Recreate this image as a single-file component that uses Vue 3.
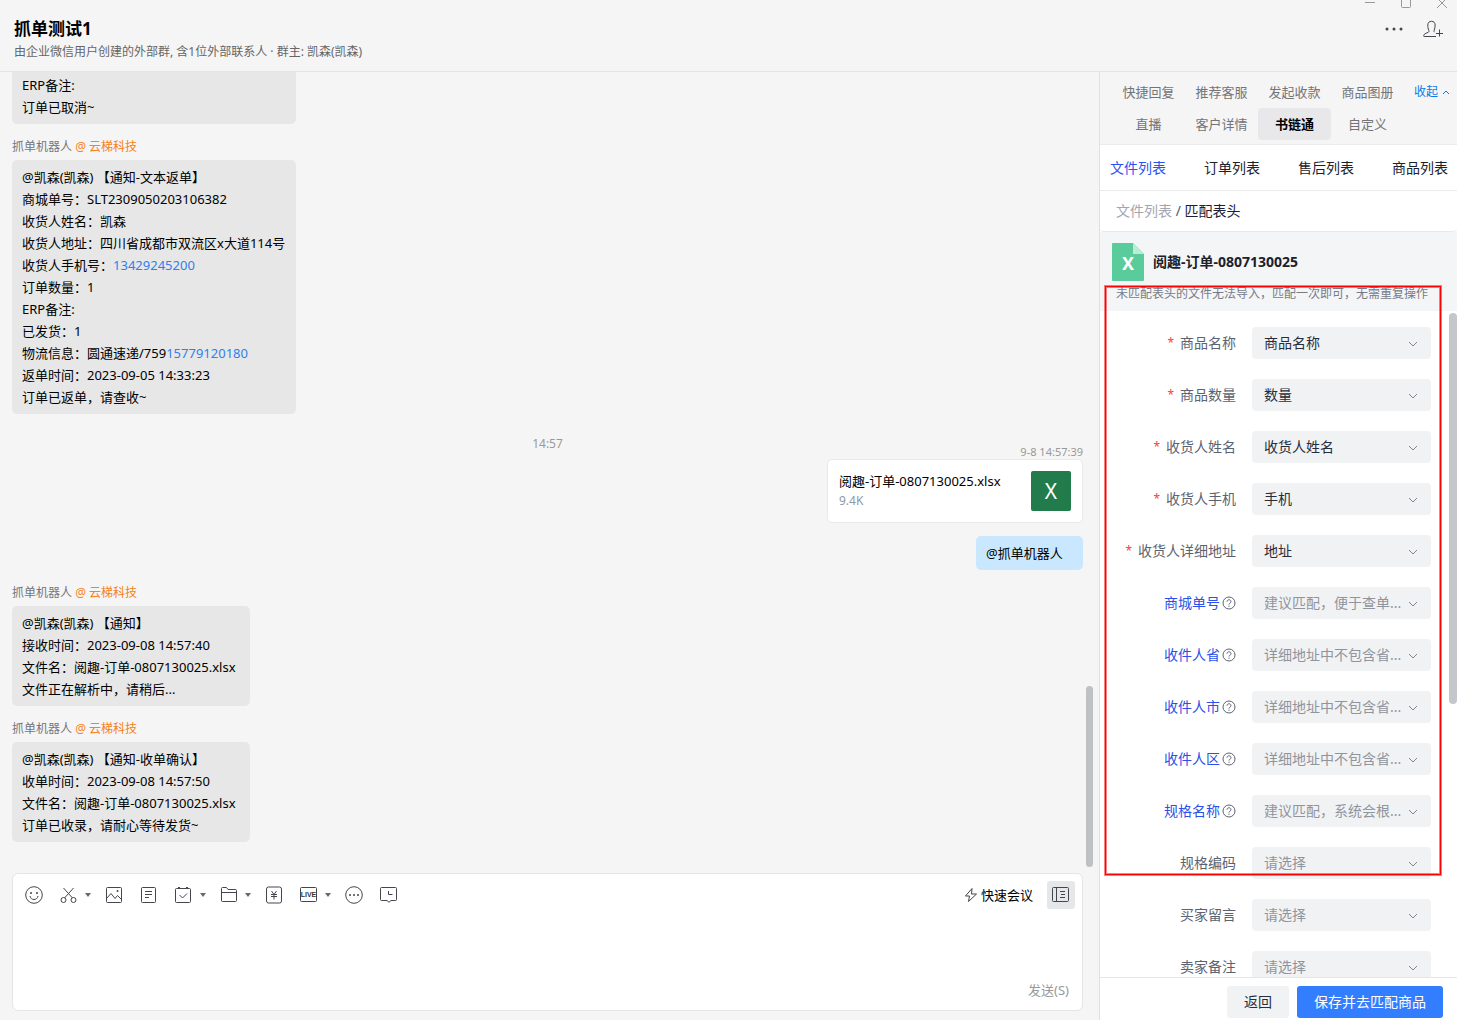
<script setup>
import { ref } from 'vue'

const panelTabs = ['快捷回复', '推荐客服', '发起收款', '商品图册', '直播', '客户详情', '书链通', '自定义']
const activePanel = ref('书链通')
const listTabs = ['文件列表', '订单列表', '售后列表', '商品列表']
const activeList = ref('文件列表')

const returned = [
  [{ t: '@凯森(凯森) 【通知-文本返单】' }],
  [{ t: '商城单号：SLT2309050203106382' }],
  [{ t: '收货人姓名：凯森' }],
  [{ t: '收货人地址：四川省成都市双流区x大道114号' }],
  [{ t: '收货人手机号：' }, { t: '13429245200', link: true }],
  [{ t: '订单数量：1' }],
  [{ t: 'ERP备注:' }],
  [{ t: '已发货：1' }],
  [{ t: '物流信息：圆通速递/759' }, { t: '15779120180', link: true }],
  [{ t: '返单时间：2023-09-05 14:33:23' }],
  [{ t: '订单已返单，请查收~' }],
]

const notices = [
  ['@凯森(凯森) 【通知】', '接收时间：2023-09-08 14:57:40', '文件名：阅趣-订单-0807130025.xlsx', '文件正在解析中，请稍后...'],
  ['@凯森(凯森) 【通知-收单确认】', '收单时间：2023-09-08 14:57:50', '文件名：阅趣-订单-0807130025.xlsx', '订单已收录，请耐心等待发货~'],
]

const fields = [
  { label: '商品名称', value: '商品名称', required: true },
  { label: '商品数量', value: '数量', required: true },
  { label: '收货人姓名', value: '收货人姓名', required: true },
  { label: '收货人手机', value: '手机', required: true },
  { label: '收货人详细地址', value: '地址', required: true },
  { label: '商城单号', hint: '建议匹配，便于查单...', help: true },
  { label: '收件人省', hint: '详细地址中不包含省...', help: true },
  { label: '收件人市', hint: '详细地址中不包含省...', help: true },
  { label: '收件人区', hint: '详细地址中不包含省...', help: true },
  { label: '规格名称', hint: '建议匹配，系统会根...', help: true },
  { label: '规格编码', hint: '请选择' },
  { label: '买家留言', hint: '请选择' },
  { label: '卖家备注', hint: '请选择' },
]

const draft = ref('')
</script>

<template>
  <div class="app">
    <header class="header">
      <div class="heading">
        <h1>抓单测试1</h1>
        <p>由企业微信用户创建的外部群, 含1位外部联系人 · 群主: 凯森(凯森)</p>
      </div>
      <div class="header-tools">
        <div class="window-controls">
          <button aria-label="最小化"><svg width="12" height="10" viewBox="0 0 12 10"><path d="M1 2.500h10" /></svg></button>
          <button aria-label="最大化"><svg width="12" height="10" viewBox="0 0 12 10"><path d="M1.500 -2v8.500q0 1 1 1h7q1 0 1-1V-2" /></svg></button>
          <button aria-label="关闭"><svg width="12" height="10" viewBox="0 0 12 10"><path d="M1 -2l10 10M11 -2L1 8" /></svg></button>
        </div>
        <div class="actions">
          <button aria-label="更多">
            <svg width="18" height="18" viewBox="0 0 18 18"><g class="fill"><circle cx="2" cy="9" r="1.500" /><circle cx="9" cy="9" r="1.500" /><circle cx="16" cy="9" r="1.500" /></g></svg>
          </button>
          <button aria-label="添加成员">
            <svg width="20" height="18" viewBox="0 0 20 18"><path d="M13 16.500H1.200q-.7 0-.5-1 .3-1.500 2.400-2.300l2.300-1q.9-.5.5-1.700C5 8.500 4.700 7 4.800 5c0-2.400 1.500-3.700 3.700-3.700S12.100 2.600 12.100 5c.1 2-.3 3.500-1 5.500-.3.800 0 1.300.5 1.700M16.500 9.500v7M13 13.500h7" /></svg>
          </button>
        </div>
      </div>
    </header>

    <main class="body">
      <section class="chat">
        <div class="messages">
          <div class="bubble cut">
            <p>ERP备注:</p>
            <p>订单已取消~</p>
          </div>

          <div class="sender">抓单机器人 <span>@ 云梯科技</span></div>
          <div class="bubble wide">
            <p v-for="(line, i) in returned" :key="i">
              <template v-for="(part, j) in line" :key="j"><a v-if="part.link" href="#">{{ part.t }}</a><template v-else>{{ part.t }}</template></template>
            </p>
          </div>

          <time class="divider">14:57</time>
          <time class="sent-at">9-8 14:57:39</time>
          <div class="file-card">
            <div class="file-info">
              <div>阅趣-订单-0807130025.xlsx</div>
              <small>9.4K</small>
            </div>
            <div class="xls">X</div>
          </div>
          <div class="bubble mine"><p>@抓单机器人</p></div>

          <template v-for="(lines, i) in notices" :key="i">
            <div class="sender">抓单机器人 <span>@ 云梯科技</span></div>
            <div class="bubble notice"><p v-for="line in lines" :key="line">{{ line }}</p></div>
          </template>
          <div class="chat-thumb"></div>
        </div>

        <form class="composer" @submit.prevent>
          <div class="toolbar">
            <button type="button" aria-label="表情">
              <svg width="18" height="18" viewBox="0 0 18 18"><circle cx="9" cy="9" r="8.300" /><path d="M5 10c.3 2.200 2 3.500 4 3.500s3.700-1.300 4-3.500" /><g class="fill"><circle cx="6" cy="7" r="1" /><circle cx="12" cy="7" r="1" /></g></svg>
            </button>
            <button type="button" class="drop" aria-label="截图">
              <svg width="18" height="18" viewBox="0 0 18 18"><path d="M3.500 2l9 10M13.500 2l-9 10" /><circle cx="3.500" cy="14" r="2.500" /><circle cx="13.500" cy="14" r="2.500" /></svg>
              <i></i>
            </button>
            <button type="button" aria-label="图片">
              <svg width="18" height="18" viewBox="0 0 18 18"><rect x="1.500" y="1.500" width="15" height="15" rx="1" /><path d="M1.500 12.500l4.500-5 4 5 2.500-3 4 4" /><circle class="fill" cx="12.500" cy="5" r="1" /></svg>
            </button>
            <button type="button" aria-label="文档">
              <svg width="18" height="18" viewBox="0 0 18 18"><rect x="1.500" y="1.500" width="14" height="15" rx="1" /><path d="M5 5.500h7M5 8.500h7M5 11.500h4" /></svg>
            </button>
            <button type="button" class="drop" aria-label="待办">
              <svg width="18" height="18" viewBox="0 0 18 18"><rect x=".5" y="2.500" width="15" height="14" rx="1" /><path d="M3 1.500h2M11 1.500h2M4.500 9l3 3L12 7.500" /></svg>
              <i></i>
            </button>
            <button type="button" class="drop" aria-label="文件">
              <svg width="18" height="18" viewBox="0 0 18 18"><path d="M1.500 15V2.500q0-1 1-1h4l1.500 2h7.500q1 0 1 1V14.500q0 1-1 1h-13q-1 0-1-1zM1.500 6.500h15" /></svg>
              <i></i>
            </button>
            <button type="button" aria-label="红包">
              <svg width="18" height="18" viewBox="0 0 18 18"><rect x="1.500" y="1" width="15" height="16" rx="2" /><path d="M6.500 5L9 8.500 11.500 5M9 8.500v5M6 8.500h6M6 10.500h6" /></svg>
            </button>
            <button type="button" class="drop" aria-label="直播">
              <svg width="18" height="18" viewBox="0 0 18 18"><rect x=".5" y="1.500" width="16" height="14" rx="1" /><text x="8.500" y="11" text-anchor="middle">LIVE</text></svg>
              <i></i>
            </button>
            <button type="button" aria-label="更多工具">
              <svg width="18" height="18" viewBox="0 0 18 18"><circle cx="9" cy="9" r="8.300" /><g class="fill"><circle cx="5" cy="9" r="1" /><circle cx="9" cy="9" r="1" /><circle cx="13" cy="9" r="1" /></g></svg>
            </button>
            <button type="button" aria-label="聊天记录">
              <svg width="18" height="18" viewBox="0 0 18 18"><path d="M1.500 1.500h14q1 0 1 1v11q0 1-1 1h-4.500l-2 1.800-2-1.800H1.500q-1 0-1-1v-11q0-1 1-1zM8.500 5v3.500h4" /></svg>
            </button>
            <button type="button" class="meeting">
              <svg width="14" height="16" viewBox="0 0 14 16"><path d="M8 1.500L1.500 9h4l-1 5.500L12.500 7h-5z" /></svg>快速会议
            </button>
            <button type="button" class="toggle" aria-label="侧边栏">
              <svg width="18" height="18" viewBox="0 0 18 18"><rect x=".5" y="1.500" width="16" height="14" rx="1" /><path d="M4.500 1.500v14M8 5.500h5M9 8.500h4M8 11.500h5" /></svg>
            </button>
          </div>
          <textarea v-model="draft" aria-label="输入消息"></textarea>
          <button type="submit" class="send">发送(S)</button>
        </form>
      </section>

      <aside class="side">
        <div class="panel-tabs">
          <div class="tab-grid">
            <button v-for="tab in panelTabs" :key="tab" :class="{ active: tab === activePanel }" @click="activePanel = tab">{{ tab }}</button>
          </div>
          <button class="collapse">收起<svg width="8" height="8" viewBox="0 0 8 8"><path d="M1 6l3-3 3 3" /></svg></button>
        </div>
        <nav class="list-tabs">
          <a v-for="tab in listTabs" :key="tab" href="#" :class="{ active: tab === activeList }" @click.prevent="activeList = tab">{{ tab }}</a>
        </nav>
        <div class="crumbs"><a href="#">文件列表</a> / <span>匹配表头</span></div>
        <div class="file-head">
          <div class="file-title">
            <div class="sheet">
              <svg width="32" height="38" viewBox="0 0 32 38"><path d="M1 0h20l11 11v26q0 1-1 1H1q-1 0-1-1V1q0-1 1-1z" fill="#5acb9b" stroke="none" /><path d="M21 0l11 11H21z" fill="#bdebd7" stroke="none" /></svg>
              <span>X</span>
            </div>
            <h2>阅趣-订单-0807130025</h2>
          </div>
          <p>未匹配表头的文件无法导入，匹配一次即可，无需重复操作</p>
        </div>
        <form class="fields" @submit.prevent>
          <div v-for="(f, i) in fields" :key="f.label" class="field">
            <label :for="'field-' + i" :class="{ optional: f.help }"><b v-if="f.required">*</b>{{ f.label }}<svg v-if="f.help" width="14" height="14" viewBox="0 0 14 14"><circle cx="7" cy="7" r="6" /><path d="M5 5.700c0-2.600 4-2.600 4 0 0 1.400-2 1.400-2 2.800M7 9.600v1.200" /></svg></label>
            <div class="select">
              <select :id="'field-' + i" :class="{ empty: !f.value }">
                <option>{{ f.value || f.hint }}</option>
              </select>
              <svg width="10" height="10" viewBox="0 0 10 10"><path d="M1 3l4 4 4-4" /></svg>
            </div>
          </div>
        </form>
        <footer class="footer">
          <button>返回</button>
          <button class="primary">保存并去匹配商品</button>
        </footer>
        <div class="side-thumb"></div>
        <div class="highlight"></div>
      </aside>
    </main>
  </div>
</template>

<style>
body {
  margin: 0;
}
</style>

<style scoped>
.app {
  display: flex;
  flex-direction: column;
  height: 100vh;
  overflow: hidden;
  background: #f5f5f5;
  color: #000;
  font: 13px/22px "Noto Sans", "Noto Sans CJK SC", sans-serif;
}
.app * {
  box-sizing: border-box;
}
h1, h2, p {
  margin: 0;
}
a {
  color: #2f80ed;
  text-decoration: none;
}
button {
  padding: 0;
  border: 0;
  background: none;
  font: inherit;
  color: inherit;
  cursor: pointer;
}
svg {
  display: block;
  flex: none;
  fill: none;
  stroke: #43464d;
  stroke-width: 1;
}
svg .fill {
  fill: #43464d;
  stroke: none;
}
svg text {
  fill: #33363d;
  stroke: none;
  font: bold 7px "Liberation Sans", sans-serif;
}

.header {
  display: flex;
  justify-content: space-between;
  flex: none;
  height: 72px;
  border-bottom: 1px solid #e4e4e4;
}
.heading {
  padding: 18px 14px 0;
}
h1 {
  font-size: 17px;
  line-height: 22px;
}
.heading p {
  color: #666;
  font-size: 12px;
  line-height: 24px;
}
.header-tools {
  display: flex;
  flex-direction: column;
  align-items: flex-end;
}
.window-controls {
  display: flex;
  gap: 24px;
  padding-right: 9px;
}
.window-controls svg {
  stroke: #999;
}
.actions {
  display: flex;
  gap: 20px;
  padding: 10px 14px 0 0;
}

.body {
  display: flex;
  flex: 1;
  min-height: 0;
}
.chat {
  display: flex;
  flex: 1;
  flex-direction: column;
  min-width: 0;
  padding-bottom: 9px;
}
.messages {
  position: relative;
  display: flex;
  flex: 1;
  flex-direction: column;
  align-items: flex-start;
  min-height: 0;
  padding: 0 16px 0 12px;
}
.bubble {
  flex: none;
  padding: 6px 10px;
  border-radius: 5px;
  background: #e7e7e7;
  white-space: nowrap;
}
.bubble.wide {
  min-width: 284px;
}
.bubble.notice {
  min-width: 238px;
}
.bubble.cut {
  min-width: 284px;
  padding-top: 2px;
  border-radius: 0 0 5px 5px;
}
.bubble.mine {
  align-self: flex-end;
  min-width: 107px;
  margin-top: 13px;
  background: #c9e7ff;
}
.sender {
  margin: 12px 0 2px;
  color: #737680;
  font-size: 12px;
  line-height: 22px;
}
.sender span {
  color: #f58220;
}
.divider {
  align-self: center;
  margin-top: 20px;
  color: #999;
  font-size: 12px;
  line-height: 20px;
}
.sent-at {
  align-self: flex-end;
  margin-top: -10px;
  color: #999;
  font-size: 11px;
  line-height: 15px;
}
.file-card {
  display: flex;
  align-self: flex-end;
  justify-content: space-between;
  width: 256px;
  padding: 11px;
  border: 1px solid #e9e9e9;
  border-radius: 5px;
  background: #fff;
}
.file-info {
  line-height: 20px;
}
.file-info small {
  display: block;
  color: #8e9aa8;
  font-size: 12px;
}
.xls {
  width: 40px;
  border-radius: 2px;
  background: #217b4a;
  color: #fff;
  font-size: 21px;
  line-height: 40px;
  text-align: center;
}
.chat-thumb {
  position: absolute;
  right: 6px;
  bottom: 6px;
  width: 7px;
  height: 181px;
  border-radius: 4px;
  background: #bfc0c4;
}

.composer {
  display: flex;
  flex-direction: column;
  flex: none;
  height: 138px;
  margin: 0 16px 0 12px;
  border: 1px solid #e5e5e5;
  border-radius: 6px;
  background: #fff;
}
.toolbar {
  display: flex;
  align-items: center;
  gap: 17px;
  height: 42px;
  padding: 0 7px 0 12px;
}
.drop {
  display: flex;
  align-items: center;
  gap: 7px;
  margin-right: -3px;
}
.drop i {
  border: 3px solid transparent;
  border-top: 4px solid #666972;
  border-bottom: 0;
}
.meeting {
  display: flex;
  align-items: center;
  gap: 3px;
  margin: 0 -3px 0 auto;
}
.toggle {
  padding: 5px;
  border-radius: 3px;
  background: #e6e7e9;
}
textarea {
  flex: 1;
  padding: 4px 12px;
  border: 0;
  outline: 0;
  background: none;
  font: inherit;
  resize: none;
}
.send {
  align-self: flex-end;
  margin: 0 13px 9px;
  color: #999;
}

.side {
  position: relative;
  display: flex;
  flex: none;
  flex-direction: column;
  width: 358px;
  border-left: 1px solid #e0e0e2;
  background: #fff;
}
.panel-tabs {
  display: flex;
  align-items: flex-start;
  gap: 10px;
  padding: 4px 7px 4px 12px;
  border-bottom: 1px solid #ebebed;
  background: #f5f5f5;
}
.tab-grid {
  display: grid;
  flex: none;
  grid-template-columns: repeat(4, 73px);
}
.tab-grid button {
  height: 32px;
  border-radius: 4px;
  color: #737478;
}
.tab-grid .active {
  background: #e8e8ea;
  color: #000;
  font-weight: bold;
}
.collapse {
  display: flex;
  align-items: center;
  gap: 4px;
  height: 32px;
  color: #0a7be8;
  font-size: 12px;
  white-space: nowrap;
}
.collapse svg {
  stroke: #0a7be8;
}
.list-tabs {
  display: flex;
  justify-content: space-between;
  padding: 12px 9px 11px 10px;
  border-bottom: 1px solid #ebebed;
  font-size: 14px;
}
.list-tabs a {
  color: #1d2129;
}
.list-tabs .active {
  color: #2b51f0;
}
.crumbs {
  padding: 9px 16px;
  border-bottom: 1px solid #e8e9ec;
  border-radius: 0 0 4px 4px;
  color: #4e5969;
  font-size: 14px;
}
.crumbs a {
  color: #a4a5b0;
}
.crumbs span {
  color: #1b2036;
}
.file-head {
  padding: 11px 12px 7px;
  background: #f4f5f7;
}
.file-title {
  display: flex;
  align-items: center;
  gap: 9px;
}
.sheet {
  position: relative;
}
.sheet span {
  position: absolute;
  inset: 0;
  color: #fff;
  font-size: 18px;
  font-weight: bold;
  line-height: 40px;
  text-align: center;
}
h2 {
  color: #1d2129;
  font-size: 14px;
}
.file-head p {
  padding: 3px 4px 0;
  color: #777b88;
  font-size: 12px;
  line-height: 20px;
  white-space: nowrap;
}
.fields {
  display: flex;
  flex: 1;
  flex-direction: column;
  gap: 20px;
  min-height: 0;
  padding: 16px 26px 0 12px;
  overflow: hidden;
  font-size: 14px;
}
.field {
  display: flex;
  flex: none;
  gap: 16px;
  height: 32px;
}
label {
  display: flex;
  flex: 1;
  align-items: center;
  justify-content: flex-end;
  gap: 2px;
  color: #5c6370;
  white-space: nowrap;
}
label.optional {
  color: #2b51e8;
}
label b {
  margin-right: 4px;
  color: #f53f3f;
  font-size: 12px;
  font-weight: normal;
}
label svg {
  stroke: #5c6370;
}
.select {
  position: relative;
  width: 179px;
}
select {
  width: 100%;
  height: 32px;
  padding: 0 26px 0 12px;
  border: 0;
  border-radius: 4px;
  appearance: none;
  background: #f1f2f4;
  color: #272e3b;
  font: inherit;
}
select.empty {
  color: #8f959e;
}
.select svg {
  position: absolute;
  top: 12px;
  right: 13px;
  stroke: #81858f;
  pointer-events: none;
}
.footer {
  display: flex;
  flex: none;
  justify-content: flex-end;
  gap: 8px;
  padding: 8px 14px 2px;
  border-top: 1px solid #e5e6eb;
  font-size: 14px;
}
.footer button {
  height: 32px;
  padding: 0 17px;
  border-radius: 3px;
  background: #f1f2f4;
  color: #272e3b;
}
.footer .primary {
  background: #337dff;
  color: #fff;
}
.side-thumb {
  position: absolute;
  top: 241px;
  right: 0;
  width: 8px;
  height: 391px;
  border-radius: 4px;
  background: #c3c6cb;
}
.highlight {
  position: absolute;
  top: 214px;
  right: 16px;
  left: 5px;
  height: 589px;
  border: 1px solid #f00;
  box-shadow: 0 0 0 1px rgba(255, 0, 0, 0.5), inset 0 0 0 1px rgba(255, 0, 0, 0.5);
  pointer-events: none;
}
</style>
